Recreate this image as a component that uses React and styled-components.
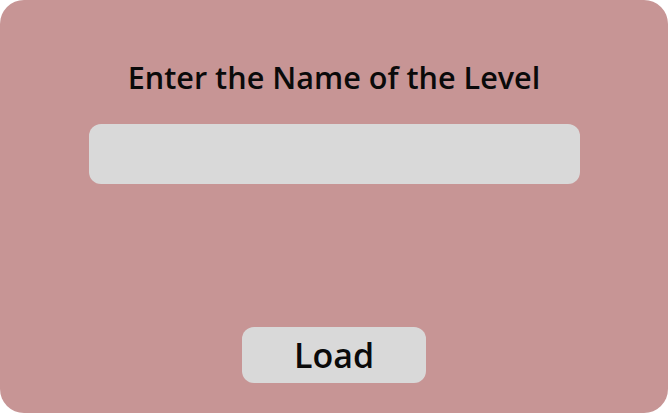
import React, { useState } from "react";
import styled, { createGlobalStyle } from "styled-components";

const GlobalStyle = createGlobalStyle`
  html, body {
    margin: 0;
    padding: 0;
    background: #ffffff;
  }
  * {
    box-sizing: border-box;
  }
`;

const Panel = styled.div`
  width: 668px;
  height: 413px;
  border-radius: 24px;
  background-color: #c79595;
  display: flex;
  flex-direction: column;
  align-items: center;
  padding-top: 57px;
  font-family: "Open Sans", "Noto Sans", sans-serif;
`;

const Title = styled.h1`
  margin: 0;
  font-size: 30.6px;
  font-weight: 600;
  line-height: 40px;
  color: #0a0a0a;
`;

const NameInput = styled.input`
  width: 491px;
  height: 60px;
  margin-top: 27px;
  border: none;
  border-radius: 12px;
  background-color: #d9d9d9;
  padding: 0 16px;
  font-family: inherit;
  font-size: 24px;
  outline: none;
`;

const LoadButton = styled.button`
  width: 184px;
  height: 56px;
  margin-top: auto;
  margin-bottom: 30px;
  border: none;
  border-radius: 12px;
  background-color: #d9d9d9;
  font-family: inherit;
  font-size: 34px;
  font-weight: 600;
  color: #0a0a0a;
  cursor: pointer;
`;

const App = () => {
  const [levelName, setLevelName] = useState("");

  return (
    <>
      <GlobalStyle />
      <Panel>
        <Title>Enter the Name of the Level</Title>
        <NameInput
          value={levelName}
          onChange={(e) => setLevelName(e.target.value)}
        />
        <LoadButton type="button">Load</LoadButton>
      </Panel>
    </>
  );
};

export default App;
